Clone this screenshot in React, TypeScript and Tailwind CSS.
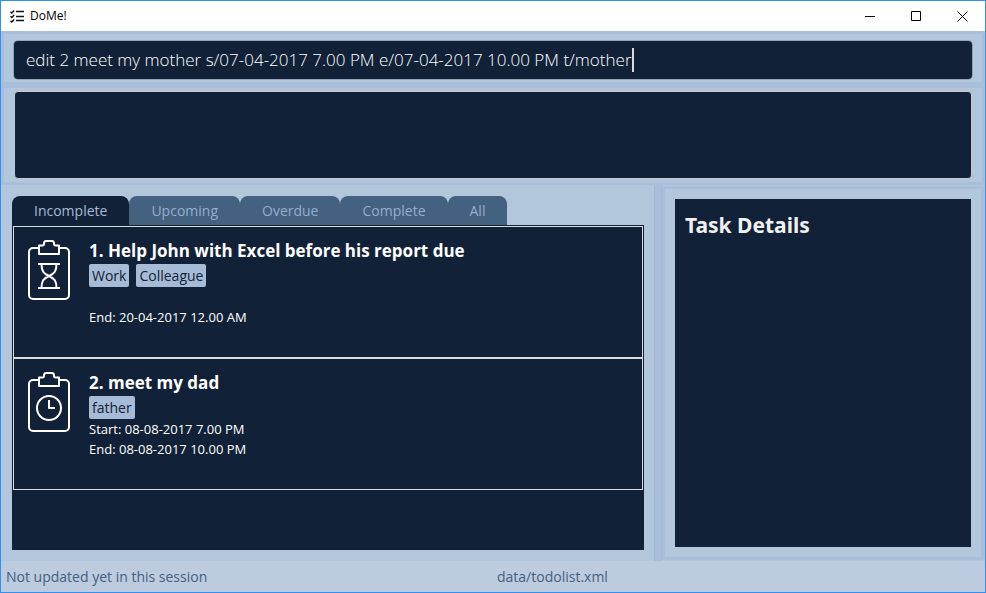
import { useState } from "react";
import type { ReactNode } from "react";

type Task = {
  title: string;
  tags: string[];
  start?: string;
  end: string;
  icon: "hourglass" | "clock";
};

const tasks: Task[] = [
  {
    title: "Help John with Excel before his report due",
    tags: ["Work", "Colleague"],
    end: "20-04-2017 12.00 AM",
    icon: "hourglass",
  },
  {
    title: "meet my dad",
    tags: ["father"],
    start: "08-08-2017 7.00 PM",
    end: "08-08-2017 10.00 PM",
    icon: "clock",
  },
];

const tabs = ["Incomplete", "Upcoming", "Overdue", "Complete", "All"];

function AppIcon() {
  return (
    <svg width="14" height="13" viewBox="0 0 14 13" fill="none" stroke="#111" aria-hidden="true">
      <path d="M0.5 1.8 1.8 3 4.2 0.5M0.5 6.3 1.8 7.5 4.2 5M0.5 10.8 1.8 12 4.2 9.5" strokeWidth="1.4" />
      <path d="M6 1.5h8M6 6.5h8M6 10.5h8" strokeWidth="1.3" />
    </svg>
  );
}

function TaskIcon({ kind }: { kind: Task["icon"] }) {
  return (
    <svg
      width="42"
      height="60"
      viewBox="0 0 42 60"
      fill="none"
      stroke="#fff"
      strokeWidth="2"
      strokeLinejoin="round"
      className="shrink-0"
      aria-hidden="true"
    >
      <path d="M11 8H5a4 4 0 0 0-4 4v43a4 4 0 0 0 4 4h32a4 4 0 0 0 4-4V12a4 4 0 0 0-4-4h-6" />
      <path d="M11 14V5.500H14.500Q16 5.500 16 3.500 16 1 18 1H24Q26 1 26 3.500 26 5.500 27.500 5.500H31V14Z" />
      {kind === "hourglass" ? (
        <>
          <path d="M10 24h22M10 48h22" />
          <path d="M13.500 24c0 7 2 9.500 7.500 12-5.500 2.500-7.500 5-7.500 12M28.500 24c0 7-2 9.500-7.500 12 5.500 2.500 7.500 5 7.500 12" />
        </>
      ) : (
        <>
          <circle cx="21" cy="36" r="12" />
          <path d="M21 28v8h6" />
        </>
      )}
    </svg>
  );
}

function WindowButton({ label, children }: { label: string; children: ReactNode }) {
  return (
    <button aria-label={label} className="flex h-7 w-[46px] items-center justify-center">
      <svg width="11" height="11" viewBox="0 0 11 11" fill="none" stroke="#000" aria-hidden="true">
        {children}
      </svg>
    </button>
  );
}

export default function App() {
  const [command, setCommand] = useState(
    "edit 2 meet my mother s/07-04-2017 7.00 PM e/07-04-2017 10.00 PM t/mother",
  );
  const [active, setActive] = useState("Incomplete");

  return (
    <div className="flex h-screen flex-col border border-[#3191f2] bg-[#b2c7dc] font-['Open_Sans','Noto_Sans',sans-serif]">
      <header className="flex h-[30px] shrink-0 items-center bg-white pl-[9px]">
        <AppIcon />
        <h1 className="ml-1.5 flex-1 text-xs text-black">DoMe!</h1>
        <WindowButton label="Minimize">
          <path d="M0 5.500h10" />
        </WindowButton>
        <WindowButton label="Maximize">
          <path d="M.5 .5h9v9h-9z" />
        </WindowButton>
        <WindowButton label="Close">
          <path d="M.5 .5l10 10M10.500 .5l-10 10" />
        </WindowButton>
      </header>

      <section className="shrink-0 border-3 border-[#a9bed8] px-2.5 pt-[7px] pb-[3px]">
        <div className="flex h-[38px] items-center overflow-hidden rounded-sm bg-[#112238] px-3 shadow-[0_0_0_1px_#8fa3bb]">
          <input
            aria-label="Command"
            value={command}
            onChange={(e) => setCommand(e.target.value)}
            className="field-sizing-content max-w-full bg-transparent text-[17px] leading-6 font-light text-white caret-transparent outline-none"
          />
          <span className="h-6 w-0.5 shrink-0 bg-[#d8dce2]" />
        </div>
      </section>

      <section className="shrink-0 border-3 border-[#a9bed8] px-2.5 py-[3px]">
        <output
          aria-label="Result"
          className="block h-22 rounded-sm border border-[#c8c9c8] bg-[#112238]"
        />
      </section>

      <main className="grid min-h-0 flex-1 grid-cols-[653fr_8px_323fr]">
        <section className="flex min-h-0 min-w-0 flex-col py-[11px] pr-2.5 pl-[11px]">
          <div role="tablist" className="flex shrink-0">
            {tabs.map((tab) => (
              <button
                key={tab}
                role="tab"
                aria-selected={tab === active}
                onClick={() => setActive(tab)}
                className={`h-[29px] rounded-t-lg px-[22px] text-sm ${
                  tab === active ? "bg-[#112238] text-[#a6bbd6]" : "bg-[#446180] text-[#93aecb]"
                }`}
              >
                {tab}
              </button>
            ))}
          </div>
          <ul role="tabpanel" className="min-h-0 flex-1 bg-[#112238] p-px">
            {tasks.map((task, i) => (
              <li key={task.title} className="flex h-33 gap-[19px] border border-[#dcdcdc] px-3.5 pt-3">
                <div className="pt-px">
                  <TaskIcon kind={task.icon} />
                </div>
                <div className="min-w-0 text-white">
                  <h2 className="text-[17px] leading-6 font-bold">
                    {i + 1}. {task.title}
                  </h2>
                  <div className="mt-px flex gap-[7px]">
                    {task.tags.map((tag) => (
                      <span key={tag} className="h-[23px] rounded-xs bg-[#a6bbd6] px-[3px] text-sm leading-[23px] text-[#112238]">
                        {tag}
                      </span>
                    ))}
                  </div>
                  <p className="h-5 text-[13px] leading-5">{task.start && `Start: ${task.start}`}</p>
                  <p className="text-[13px] leading-5">End: {task.end}</p>
                </div>
              </li>
            ))}
          </ul>
        </section>

        <div className="border-x border-[#a3b9d3] bg-[#a9bed8]" />

        <aside className="my-px flex min-w-0 border-3 border-r-4 border-[#a9bed8] p-2.5">
          <div className="flex-1 bg-[#112238] px-2.5 py-3">
            <h2 className="font-['Noto_Sans','Open_Sans',sans-serif] text-[21px] leading-7 font-bold text-[#f0f0f0]">
              Task Details
            </h2>
          </div>
        </aside>
      </main>

      <footer className="grid h-[31px] shrink-0 grid-cols-2 items-center bg-[#bccbde] text-sm text-[#446180]">
        <span className="px-[5px]">Not updated yet in this session</span>
        <span className="px-1">data/todolist.xml</span>
      </footer>
    </div>
  );
}
